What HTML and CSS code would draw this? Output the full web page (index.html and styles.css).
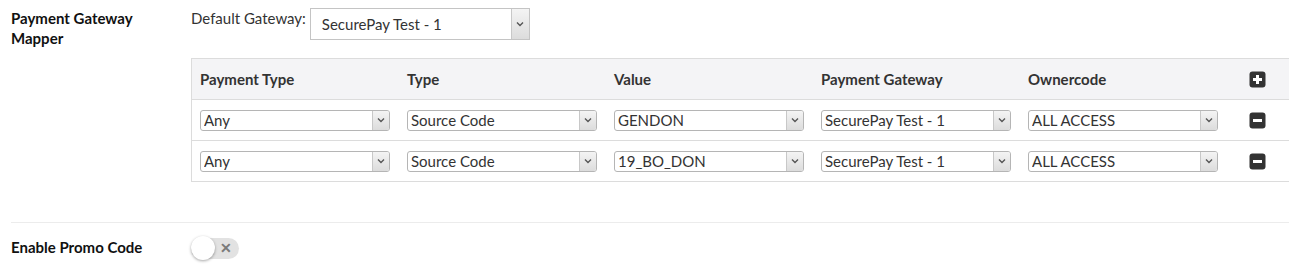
FILE: index.html
```html
<html>
    <head>
        <title>Payment Settings</title>
        <meta name="viewport" content="width=device-width, initial-scale=1.0">
        <link rel="stylesheet" href="styles.css">
    </head>
    <body>
    <!-- gateway mapper section -->
    <div class="form-row">
        <div class="form-label">Payment Gateway<br>Mapper</div>
        <div class="form-field">
            <div class="default-gateway">
                <span class="default-label">Default Gateway:</span>
                <div class="select-wrap select-big">
                    <select><option>SecurePay Test - 1</option></select>
                    <span class="select-arrow"><svg width="8" height="6" viewBox="0 0 8 6"><path d="M1 1.5 L4 4.5 L7 1.5" fill="none" stroke="#555" stroke-width="1.4"/></svg></span>
                </div>
            </div>

            <table class="mapper-table">
                <tr class="head-row">
                    <th>Payment Type</th>
                    <th>Type</th>
                    <th>Value</th>
                    <th>Payment Gateway</th>
                    <th>Ownercode</th>
                    <th class="icon-cell">
                        <svg class="sq-icon" width="17" height="17" viewBox="0 0 17 17"><rect x="0.5" y="0.5" width="16" height="16" rx="3" fill="#333"/><path d="M8.5 4 V13 M4 8.5 H13" stroke="#fff" stroke-width="3"/></svg>
                    </th>
                </tr>
                <tr>
                    <td><div class="select-wrap"><select><option>Any</option></select><span class="select-arrow"><svg width="8" height="6" viewBox="0 0 8 6"><path d="M1 1.5 L4 4.5 L7 1.5" fill="none" stroke="#555" stroke-width="1.4"/></svg></span></div></td>
                    <td><div class="select-wrap"><select><option>Source Code</option></select><span class="select-arrow"><svg width="8" height="6" viewBox="0 0 8 6"><path d="M1 1.5 L4 4.5 L7 1.5" fill="none" stroke="#555" stroke-width="1.4"/></svg></span></div></td>
                    <td><div class="select-wrap"><select><option>GENDON</option></select><span class="select-arrow"><svg width="8" height="6" viewBox="0 0 8 6"><path d="M1 1.5 L4 4.5 L7 1.5" fill="none" stroke="#555" stroke-width="1.4"/></svg></span></div></td>
                    <td><div class="select-wrap"><select><option>SecurePay Test - 1</option></select><span class="select-arrow"><svg width="8" height="6" viewBox="0 0 8 6"><path d="M1 1.5 L4 4.5 L7 1.5" fill="none" stroke="#555" stroke-width="1.4"/></svg></span></div></td>
                    <td><div class="select-wrap"><select><option>ALL ACCESS</option></select><span class="select-arrow"><svg width="8" height="6" viewBox="0 0 8 6"><path d="M1 1.5 L4 4.5 L7 1.5" fill="none" stroke="#555" stroke-width="1.4"/></svg></span></div></td>
                    <td class="icon-cell">
                        <svg class="sq-icon" width="17" height="17" viewBox="0 0 17 17"><rect x="0.5" y="0.5" width="16" height="16" rx="3" fill="#333"/><path d="M4 8.5 H13" stroke="#fff" stroke-width="3"/></svg>
                    </td>
                </tr>
                <tr>
                    <td><div class="select-wrap"><select><option>Any</option></select><span class="select-arrow"><svg width="8" height="6" viewBox="0 0 8 6"><path d="M1 1.5 L4 4.5 L7 1.5" fill="none" stroke="#555" stroke-width="1.4"/></svg></span></div></td>
                    <td><div class="select-wrap"><select><option>Source Code</option></select><span class="select-arrow"><svg width="8" height="6" viewBox="0 0 8 6"><path d="M1 1.5 L4 4.5 L7 1.5" fill="none" stroke="#555" stroke-width="1.4"/></svg></span></div></td>
                    <td><div class="select-wrap"><select><option>19_BO_DON</option></select><span class="select-arrow"><svg width="8" height="6" viewBox="0 0 8 6"><path d="M1 1.5 L4 4.5 L7 1.5" fill="none" stroke="#555" stroke-width="1.4"/></svg></span></div></td>
                    <td><div class="select-wrap"><select><option>SecurePay Test - 1</option></select><span class="select-arrow"><svg width="8" height="6" viewBox="0 0 8 6"><path d="M1 1.5 L4 4.5 L7 1.5" fill="none" stroke="#555" stroke-width="1.4"/></svg></span></div></td>
                    <td><div class="select-wrap"><select><option>ALL ACCESS</option></select><span class="select-arrow"><svg width="8" height="6" viewBox="0 0 8 6"><path d="M1 1.5 L4 4.5 L7 1.5" fill="none" stroke="#555" stroke-width="1.4"/></svg></span></div></td>
                    <td class="icon-cell">
                        <svg class="sq-icon" width="17" height="17" viewBox="0 0 17 17"><rect x="0.5" y="0.5" width="16" height="16" rx="3" fill="#333"/><path d="M4 8.5 H13" stroke="#fff" stroke-width="3"/></svg>
                    </td>
                </tr>
            </table>
        </div>
    </div>

    <hr class="divider"/>

    <!-- promo code toggle -->
    <div class="form-row promo-row">
        <div class="form-label">Enable Promo Code</div>
        <div class="form-field">
            <div class="toggle">
                <span class="toggle-knob"></span>
                <span class="toggle-x">&#x2715;</span>
            </div>
        </div>
    </div>
    </body>
</html>
```

FILE: styles.css
```css
body{
    margin: 0;
    padding: 0;
    background-color: #fff;
    color: #222;
    font-family: 'Lato', sans-serif;
    font-size: 15px;
}

.form-row{
    display: flex;
    padding-left: 11px;
}

.form-label{
    width: 180px;
    flex-shrink: 0;
    font-weight: bold;
    line-height: 20px;
    padding-top: 8px;
    color: #111;
}

.form-field{
    flex: 1;
    padding-top: 8px;
}

.default-gateway{
    display: flex;
    align-items: flex-start;
    gap: 4px;
}

.default-label{
    padding-top: 1px;
    color: #333;
}

.select-wrap{
    position: relative;
    width: 190px;
    height: 21px;
}

.select-wrap select{
    -webkit-appearance: none;
    appearance: none;
    width: 100%;
    height: 100%;
    margin: 0;
    border: 1px solid #b5b5b5;
    border-radius: 3px;
    background: #fff;
    font-family: 'Lato', sans-serif;
    font-size: 15px;
    color: #333;
    padding: 0 0 0 3px;
    outline: none;
}

.select-arrow{
    position: absolute;
    top: 1px;
    right: 1px;
    bottom: 1px;
    width: 16px;
    border-left: 1px solid #c8c8c8;
    border-radius: 0 2px 2px 0;
    background: linear-gradient(#f4f4f4, #dcdcdc);
    display: flex;
    align-items: center;
    justify-content: center;
    pointer-events: none;
}

.select-big{
    width: 220px;
    height: 32px;
}

.select-big select{
    border-radius: 0;
    border-color: #c4c4c4;
    font-size: 15px;
    padding-left: 11px;
}

.select-big .select-arrow{
    border-radius: 0;
    width: 17px;
}

.mapper-table{
    margin-top: 18px;
    width: 100%;
    border-collapse: collapse;
    border: 1px solid #dcdcdc;
    border-right: none;
    table-layout: fixed;
}

.mapper-table th,
.mapper-table td{
    width: 199px;
    height: 41px;
    padding: 0 0 0 8px;
    text-align: left;
    border-bottom: 1px solid #dcdcdc;
}

.mapper-table th{
    background-color: #f4f4f6;
    font-weight: bold;
    color: #333;
    font-size: 15px;
}

.mapper-table .icon-cell{
    width: auto;
    padding-left: 22px;
}

.sq-icon{
    display: block;
}

.divider{
    border: none;
    border-top: 1px solid #ececec;
    margin: 40px 0 0 11px;
}

.promo-row .form-label{
    padding-top: 14px;
}

.promo-row .form-field{
    padding-top: 13px;
}

.toggle{
    position: relative;
    width: 48px;
    height: 21px;
    margin-top: 2px;
    border-radius: 11px;
    background-color: #e2e2e2;
}

.toggle-knob{
    position: absolute;
    left: 0;
    top: -2px;
    width: 24px;
    height: 24px;
    border-radius: 50%;
    background-color: #fff;
    box-shadow: 0 1px 3px rgba(0,0,0,0.35);
}

.toggle-x{
    position: absolute;
    left: 29px;
    top: 1px;
    font-size: 14px;
    font-weight: bold;
    color: #7a7a7a;
}
```
